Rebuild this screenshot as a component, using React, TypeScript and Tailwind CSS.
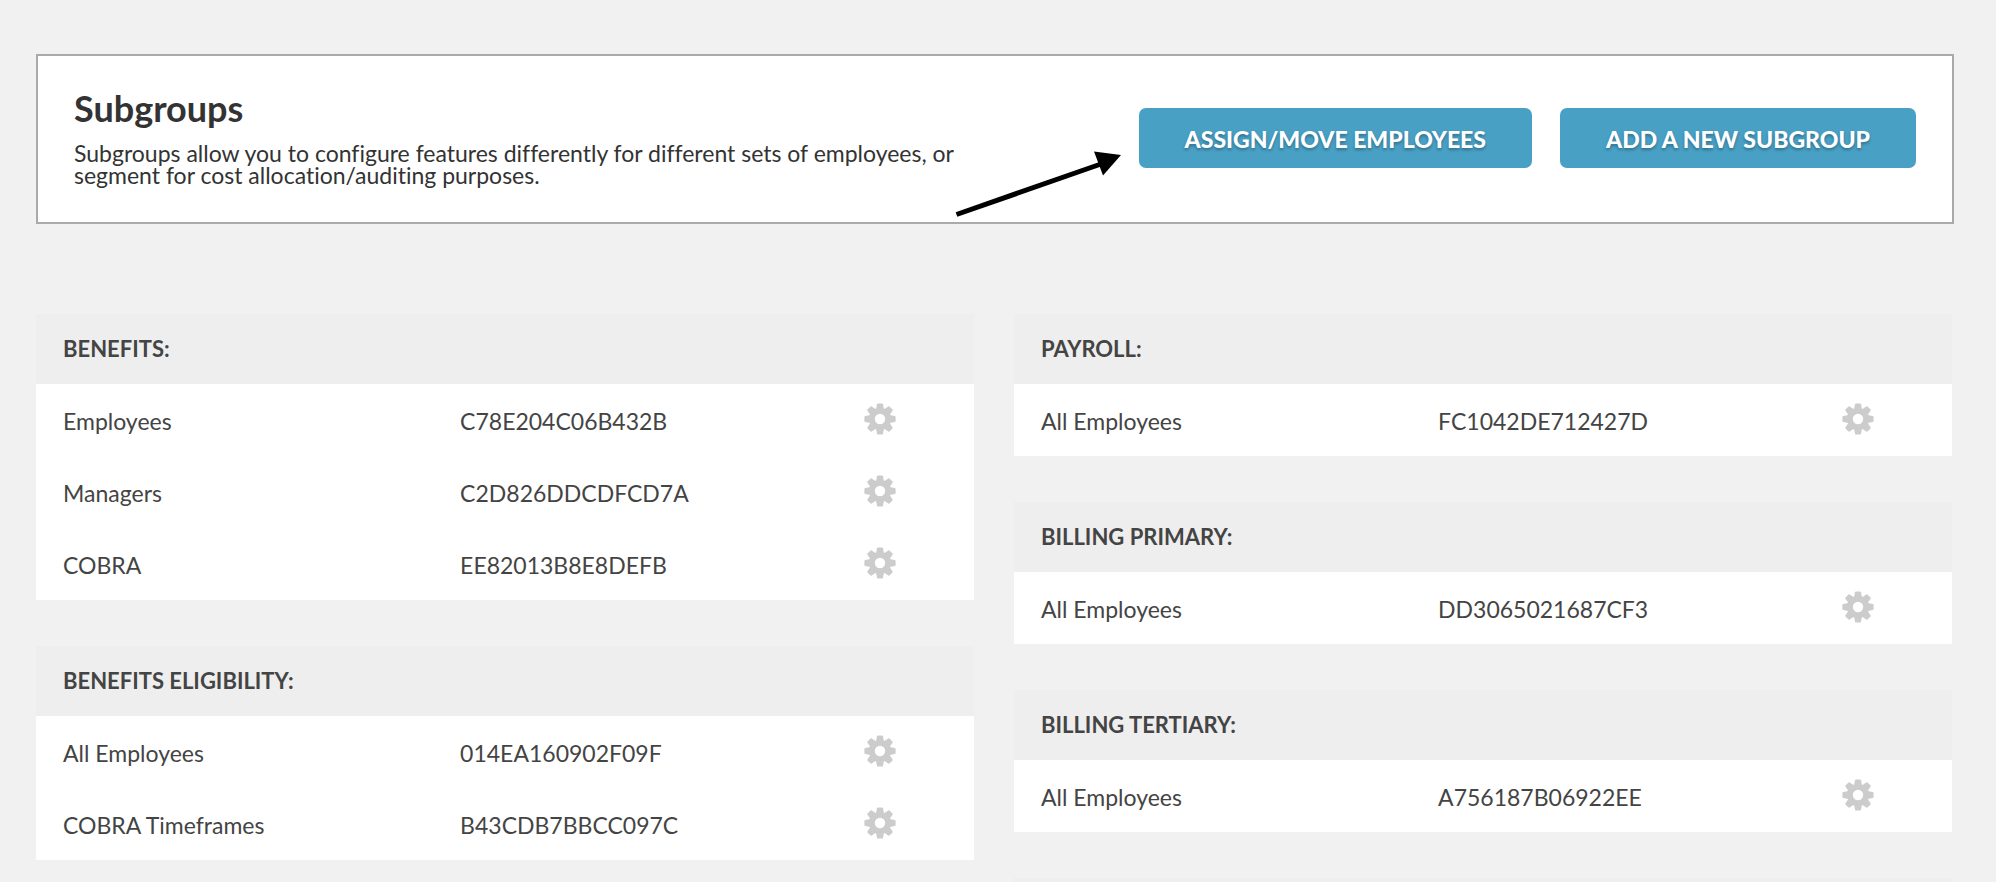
type Entry = { name: string; code: string };
type Group = { title: string; entries: Entry[] };

const leftGroups: Group[] = [
  {
    title: 'BENEFITS:',
    entries: [
      { name: 'Employees', code: 'C78E204C06B432B' },
      { name: 'Managers', code: 'C2D826DDCDFCD7A' },
      { name: 'COBRA', code: 'EE82013B8E8DEFB' },
    ],
  },
  {
    title: 'BENEFITS ELIGIBILITY:',
    entries: [
      { name: 'All Employees', code: '014EA160902F09F' },
      { name: 'COBRA Timeframes', code: 'B43CDB7BBCC097C' },
    ],
  },
];

const rightGroups: Group[] = [
  { title: 'PAYROLL:', entries: [{ name: 'All Employees', code: 'FC1042DE712427D' }] },
  { title: 'BILLING PRIMARY:', entries: [{ name: 'All Employees', code: 'DD3065021687CF3' }] },
  { title: 'BILLING TERTIARY:', entries: [{ name: 'All Employees', code: 'A756187B06922EE' }] },
];

const toothAngles = [0, 45, 90, 135, 180, 225, 270, 315];

function GearIcon() {
  return (
    <svg viewBox="-16 -16 32 32" className="block size-8" aria-hidden="true">
      <circle r="8.1" fill="none" stroke="#cccccc" strokeWidth="5.8" />
      {toothAngles.map((angle) => (
        <path
          key={angle}
          d="M-4.2 -8.5 L-3 -14.7 Q-2.8 -15.6 -1.9 -15.6 L1.9 -15.6 Q2.8 -15.6 3 -14.7 L4.2 -8.5 Z"
          fill="#cccccc"
          transform={`rotate(${angle})`}
        />
      ))}
    </svg>
  );
}

function GroupTable({ group }: { group: Group }) {
  return (
    <table className="w-full table-fixed border-collapse bg-white text-left text-[#444444]">
      <colgroup>
        <col className="w-[45%]" />
        <col className="w-[35%]" />
        <col className="w-[20%]" />
      </colgroup>
      <thead>
        <tr className="h-[70px] bg-[#eeeeee]">
          <th colSpan={3} scope="colgroup" className="pl-[27px] text-[22px] leading-7 font-bold">
            {group.title}
          </th>
        </tr>
      </thead>
      <tbody className="text-[23px] leading-8">
        {group.entries.map((entry) => (
          <tr key={entry.name} className="h-[72px]">
            <td className="pt-0.5 pl-[27px]">{entry.name}</td>
            <td className="pt-0.5 pl-0.5">{entry.code}</td>
            <td className="pb-0.5">
              <button type="button" aria-label={`${entry.name} settings`} className="mx-auto block cursor-pointer">
                <GearIcon />
              </button>
            </td>
          </tr>
        ))}
      </tbody>
    </table>
  );
}

function ActionButton({ label }: { label: string }) {
  return (
    <button
      type="button"
      className="h-[60px] cursor-pointer rounded-[7px] bg-[#48a0c5] px-[46px] pt-0.5 text-[23px] font-black whitespace-nowrap text-white [text-shadow:0_2px_3px_rgba(0,0,0,0.3)]"
    >
      {label}
    </button>
  );
}

export default function App() {
  return (
    <main className="h-screen overflow-y-auto bg-[#f1f1f1] pt-[54px] font-['Lato',sans-serif] [scrollbar-width:none]">
      <header className="mr-[42px] ml-9 flex items-start justify-between border-2 border-[#aaaaaa] bg-white px-9 pt-[30px] pb-9 text-[#333333]">
        <div className="w-1/2">
          <h1 className="text-4xl leading-[44px] font-bold">Subgroups</h1>
          <p className="mt-3 text-[23px] leading-[22px] [font-variant-ligatures:none]">
            Subgroups allow you to configure features differently for different sets of employees, or segment for cost
            allocation/auditing purposes.
          </p>
        </div>
        <div className="relative mt-[22px] flex gap-7">
          <svg viewBox="0 0 170 72" className="absolute top-10 right-full mr-4 h-[72px] w-[170px]" aria-hidden="true">
            <path d="M3.5 66.5 L148 16" stroke="#000000" strokeWidth="5" fill="none" />
            <path d="M168 7 L141 3.5 L150 27.5 Z" fill="#000000" />
          </svg>
          <ActionButton label="ASSIGN/MOVE EMPLOYEES" />
          <ActionButton label="ADD A NEW SUBGROUP" />
        </div>
      </header>

      <div className="mt-[90px] mr-11 ml-9 grid grid-cols-2 items-start gap-10">
        <div className="flex flex-col gap-[46px]">
          {leftGroups.map((group) => (
            <GroupTable key={group.title} group={group} />
          ))}
        </div>
        <div className="flex flex-col gap-[46px]">
          {rightGroups.map((group) => (
            <GroupTable key={group.title} group={group} />
          ))}
          <div className="h-[70px] bg-[#eeeeee]" />
        </div>
      </div>
    </main>
  );
}
